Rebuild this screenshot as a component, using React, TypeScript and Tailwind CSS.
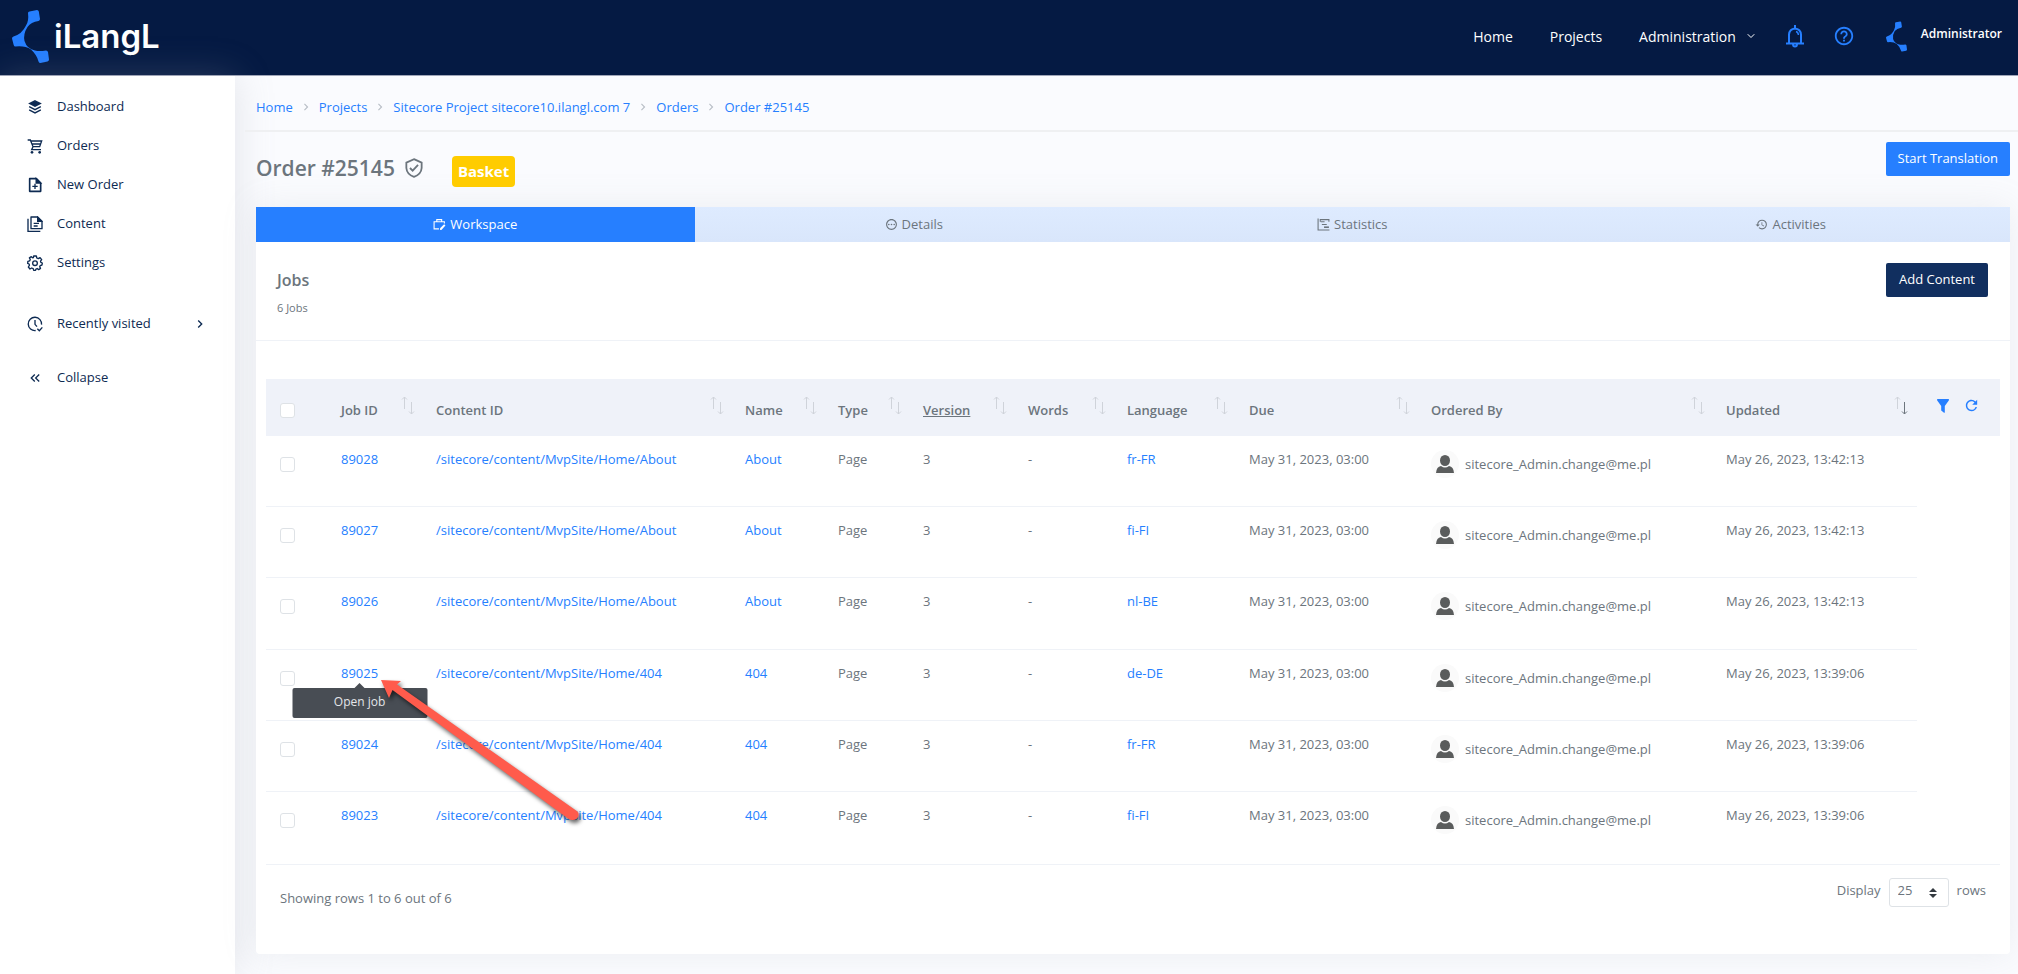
import {
  MdHistory,
  MdHelpOutline,
  MdRefresh,
  MdKeyboardDoubleArrowLeft,
  MdChevronRight,
  MdOutlinePending,
} from 'react-icons/md';
import { ChevronDown } from 'lucide-react';

interface Job {
  id: number;
  path: string;
  name: string;
  language: string;
  updated: string;
}

const jobs: Job[] = [
  { id: 89028, path: '/sitecore/content/MvpSite/Home/About', name: 'About', language: 'fr-FR', updated: 'May 26, 2023, 13:42:13' },
  { id: 89027, path: '/sitecore/content/MvpSite/Home/About', name: 'About', language: 'fi-FI', updated: 'May 26, 2023, 13:42:13' },
  { id: 89026, path: '/sitecore/content/MvpSite/Home/About', name: 'About', language: 'nl-BE', updated: 'May 26, 2023, 13:42:13' },
  { id: 89025, path: '/sitecore/content/MvpSite/Home/404', name: '404', language: 'de-DE', updated: 'May 26, 2023, 13:39:06' },
  { id: 89024, path: '/sitecore/content/MvpSite/Home/404', name: '404', language: 'fr-FR', updated: 'May 26, 2023, 13:39:06' },
  { id: 89023, path: '/sitecore/content/MvpSite/Home/404', name: '404', language: 'fi-FI', updated: 'May 26, 2023, 13:39:06' },
];

// the content column has no width, it takes what is left
const columns = [
  { label: 'Job ID', width: 'w-[95px]' },
  { label: 'Content ID', width: '' },
  { label: 'Name', width: 'w-[93px]' },
  { label: 'Type', width: 'w-[85px]' },
  { label: 'Version', width: 'w-[105px]' },
  { label: 'Words', width: 'w-[99px]' },
  { label: 'Language', width: 'w-[122px]' },
  { label: 'Due', width: 'w-[182px]' },
  { label: 'Ordered By', width: 'w-[295px]' },
  { label: 'Updated', width: 'w-[203px]' },
];

const crumbs = ['Home', 'Projects', 'Sitecore Project sitecore10.ilangl.com 7', 'Orders', 'Order #25145'];

function LogoMark({ className }: { className: string }) {
  return (
    <svg viewBox="0 0 37 53" className={className} fill="#267fff" aria-hidden="true">
      <path d="M17.500 1.500 L25 0 Q26.500 0 26.800 1.500 L28 9 Q28 10.500 26.500 11 Q19 12 15.500 17 Q11 24 12.500 31 Q15 39 23 40.500 Q27 41.500 34 40.500 Q35.500 40.500 36 42 L37 49.500 Q37 51 35.500 51.500 L28.500 53 Q27 53 26.500 51.500 Q25 45 19 39.500 Q13 35.500 3.500 36.500 Q2 36.500 1.700 35 L0 28.500 Q0 27 1.500 26.500 Q10 24 14 15.500 Q17 11 16 3 Q16 1.800 17.500 1.500 Z" />
    </svg>
  );
}

function StackIcon() {
  return (
    <svg viewBox="0 0 24 24" className="size-4 p-px" fill="none" stroke="currentColor" strokeWidth="2.500" aria-hidden="true">
      <path d="M12 1.500 L21 6 L12 10.500 L3 6 Z" fill="currentColor" />
      <path d="M2 11.500 L12 16.500 L22 11.500" />
      <path d="M2 17 L12 22 L22 17" />
    </svg>
  );
}

function CartIcon() {
  return (
    <svg viewBox="0 0 24 24" className="size-4" fill="none" stroke="currentColor" strokeWidth="2" aria-hidden="true">
      <path d="M1 3 H5 L9 13 H19 L22 4.500 H6 M9 13 L7 17.500 H21 M8 9 H20" />
      <circle cx="7.500" cy="21.500" r="2" fill="currentColor" stroke="none" />
      <circle cx="19" cy="21.500" r="2" fill="currentColor" stroke="none" />
    </svg>
  );
}

function FileAddIcon() {
  return (
    <svg viewBox="0 0 24 24" className="size-4" fill="none" stroke="currentColor" strokeWidth="2.500" aria-hidden="true">
      <path d="M4 2.500 H14 L20.500 9 V21.500 H4 Z" strokeLinejoin="round" />
      <path d="M14 3 V9 H20 Z" fill="currentColor" />
      <path d="M12 10 V18 M8 14 H16" strokeWidth="2" />
    </svg>
  );
}

function FilesIcon() {
  return (
    <svg viewBox="0 0 24 24" className="size-4" fill="none" stroke="currentColor" strokeWidth="2" aria-hidden="true">
      <path d="M6 1.500 H16 L22.500 8 V19 H6 Z" strokeLinejoin="round" />
      <path d="M16 2 V8 H22 Z" fill="currentColor" />
      <path d="M1.500 4 V23 H20 M10 11 H18 M10 15 H16" />
    </svg>
  );
}

function GearIcon() {
  return (
    <svg viewBox="0 0 24 24" className="size-4" fill="none" stroke="currentColor" strokeWidth="2" strokeLinejoin="round" aria-hidden="true">
      <path d="M10 1.500 H14 L14.700 4.500 L17 5.500 L19.600 3.900 L22 7 L20.300 9.300 L20.800 11 L23 12 L22.500 15 L19.800 15.800 L19 17.500 L20.300 20 L17.500 22 L15.300 20.300 L13.500 21 L12.800 23 H10 L9.300 20.500 L7 19.500 L4.500 21 L2 18 L3.600 15.500 L3.200 13.500 L1 12.500 L1.300 9.500 L3.900 8.800 L4.900 6.700 L3.600 4.300 L6.500 2.500 L8.500 4.200 L9.600 3.800 Z" />
      <circle cx="12" cy="12.300" r="3.500" />
    </svg>
  );
}

function ClockCheckIcon() {
  return (
    <svg viewBox="0 0 24 24" className="size-4" fill="none" stroke="currentColor" strokeWidth="2" aria-hidden="true">
      <path d="M13 21.800 A10 10 0 1 1 21.800 13" />
      <path d="M12 6 V12.500 L15 16 M15.500 19 L18.500 22 L23 17" />
    </svg>
  );
}

function BriefcaseEditIcon() {
  return (
    <svg viewBox="0 0 24 24" className="size-[13px]" fill="none" stroke="currentColor" strokeWidth="2" aria-hidden="true">
      <path d="M11 20 H2 V7 H21 V10 M7 7 V3 H16 V7" />
      <path d="M13 22 V19 L20.500 11.500 L23 14 L15.500 22 Z" fill="currentColor" stroke="none" />
    </svg>
  );
}

function GanttIcon() {
  return (
    <svg viewBox="0 0 24 24" className="size-[13px]" fill="none" stroke="currentColor" strokeWidth="2" aria-hidden="true">
      <path d="M2 1 V22 H23 M6 7 V3 H22 V7 M7 7 H14 M9 12 H18" />
      <path d="M13 17 H22" strokeWidth="3" />
    </svg>
  );
}

function ShieldIcon() {
  return (
    <svg viewBox="0 0 20 22" className="h-5 w-[18px]" fill="none" stroke="currentColor" strokeWidth="2" aria-hidden="true">
      <path d="M10 1.200 L18.500 5 V11 Q18 18 10 20.800 Q2 18 1.500 11 V5 Z" />
      <path d="M5.500 11 L8.500 14 L14.500 7.500" />
    </svg>
  );
}

function BellIcon() {
  return (
    <svg viewBox="0 0 20 24" className="h-6 w-5" fill="none" stroke="currentColor" strokeWidth="2" aria-hidden="true">
      <path d="M1 19.500 H19 M4 19 V10.500 Q4.500 5 10 4.500 Q15.500 5 16 10.500 V19 M10 1 V4.500 M8 20 Q8 22.500 10 22.500 Q12 22.500 12 20" />
      <path d="M11 7.500 Q13 8 13.500 11" strokeWidth="1.500" />
    </svg>
  );
}

function FunnelIcon() {
  return (
    <svg viewBox="0 0 12 14" className="h-[14px] w-3" fill="currentColor" aria-hidden="true">
      <path d="M0.500 0 H11.500 Q12.300 0.500 11.800 1.500 L7.800 7 V13.500 Q7.500 14 7 13.700 L4.200 11.500 V7 L0.200 1.500 Q-0.200 0.500 0.500 0 Z" />
    </svg>
  );
}

function SortArrows({ active = false }: { active?: boolean }) {
  return (
    <svg viewBox="0 0 14 19" className="h-[19px] w-[14px]" fill="none" strokeWidth="1" aria-hidden="true">
      <g stroke="#cfd3da">
        <path d="M3.500 13 V1 M1 3.500 L3.500 1 L6 3.500" />
      </g>
      <g stroke={active ? '#6c757d' : '#cfd3da'}>
        <path d="M10.500 6 V18 M8 15.500 L10.500 18 L13 15.500" />
      </g>
    </svg>
  );
}

function Person() {
  return (
    <span className="flex size-7 items-center justify-center rounded-full bg-[#fafafa]">
      <svg viewBox="0 0 18 18" className="size-[18px]" fill="#5a5c5c" aria-hidden="true">
        <path d="M0 18 Q0.500 11.500 5 11 Q9 14 13 11 Q17.500 11.500 18 18 Z" />
        <ellipse cx="9" cy="5.500" rx="5" ry="5.500" />
      </svg>
    </span>
  );
}

function Pointer() {
  return (
    <svg
      viewBox="0 0 210 150"
      className="pointer-events-none absolute top-[14px] left-9 z-20 h-[150px] w-[210px] max-w-none drop-shadow-[2px_3px_2px_rgba(0,0,0,0.6)]"
      aria-hidden="true">
      <path
        d="M4 3 L24 4 L20 7.500 L200.500 134.500 Q203 138 200 141.500 Q196 144.500 191 141.500 L15.500 13 L12 21 Z"
        fill="#ff5b4c"
      />
    </svg>
  );
}

function JobTooltip() {
  return (
    <span
      role="tooltip"
      className="absolute top-[25px] left-1/2 z-10 h-[30px] w-[135px] -translate-x-1/2 rounded-xs bg-[#484d54] text-center text-xs leading-7 text-[#e4e6e9]">
      <span className="absolute -top-[5px] left-1/2 -translate-x-1/2 border-x-[5px] border-b-[5px] border-x-transparent border-b-[#484d54]" />
      Open job
    </span>
  );
}

function Checkbox({ label }: { label: string }) {
  return (
    <input
      type="checkbox"
      aria-label={label}
      className="block size-[15px] appearance-none rounded-[3px] border border-[#dee2e6] bg-white"
    />
  );
}

function Header() {
  return (
    <header className="flex h-[76px] items-center justify-between border-b border-[#9fa5b8] bg-[#051a43] pr-4 pb-[3px] pl-3 text-white">
      <a href="#" className="flex items-center gap-[5px]">
        <LogoMark className="h-[53px] w-[37px]" />
        <span className="font-['Inter'] text-[33px] leading-10 font-semibold">iLangL</span>
      </a>
      <nav className="flex items-center text-[14px]">
        <a href="#" className="mr-[37px]">Home</a>
        <a href="#" className="mr-[37px]">Projects</a>
        <button type="button" className="mr-7 flex items-center gap-[9px]">
          Administration <ChevronDown className="size-3" strokeWidth={2} />
        </button>
        <button type="button" aria-label="Notifications" className="mr-7 text-[#267fff]">
          <BellIcon />
        </button>
        <button type="button" aria-label="Help" className="mr-[31px] text-[#267fff]">
          <MdHelpOutline className="size-[22px]" />
        </button>
        <a href="#" className="flex items-center gap-[14px] text-xs font-semibold">
          <LogoMark className="h-[31px] w-[21px]" />
          <span className="pb-1">Administrator</span>
        </a>
      </nav>
    </header>
  );
}

function Sidebar() {
  const items = [
    { label: 'Dashboard', icon: <StackIcon /> },
    { label: 'Orders', icon: <CartIcon /> },
    { label: 'New Order', icon: <FileAddIcon /> },
    { label: 'Content', icon: <FilesIcon /> },
    { label: 'Settings', icon: <GearIcon /> },
  ];
  const row = 'flex h-[39px] w-full items-center gap-[14px] pr-[27px] pl-[27px]';
  return (
    <aside className="w-[235px] shrink-0 bg-white pt-[11px] text-[13px] text-[#0d2a52] shadow-[0_0_35px_0_rgba(154,161,171,0.25)]">
      <ul>
        {items.map((item) => (
          <li key={item.label}>
            <a href="#" className={row}>
              {item.icon}
              {item.label}
            </a>
          </li>
        ))}
      </ul>
      <button type="button" className={`${row} mt-[22px]`}>
        <ClockCheckIcon />
        Recently visited
        <MdChevronRight className="ml-auto size-4" />
      </button>
      <button type="button" className={`${row} mt-[15px]`}>
        <MdKeyboardDoubleArrowLeft className="size-4" />
        Collapse
      </button>
    </aside>
  );
}

function Tabs() {
  const tab = 'flex h-[35px] flex-1 items-center justify-center gap-1';
  return (
    <div role="tablist" className="flex bg-linear-to-b from-[#deebff] to-[#d9e6fb] text-[13px]">
      <button type="button" role="tab" aria-selected="true" className={`${tab} bg-[#267fff] font-medium text-white`}>
        <BriefcaseEditIcon /> Workspace
      </button>
      <button type="button" role="tab" aria-selected="false" className={tab}>
        <MdOutlinePending className="size-[13px]" /> Details
      </button>
      <button type="button" role="tab" aria-selected="false" className={tab}>
        <GanttIcon /> Statistics
      </button>
      <button type="button" role="tab" aria-selected="false" className={tab}>
        <MdHistory className="size-[13px]" /> Activities
      </button>
    </div>
  );
}

function JobsTable() {
  const cell = 'border-b border-[#eff2f7] pt-[13px] pl-3 align-top leading-5 group-last:border-b-0';
  return (
    <table className="w-full table-fixed border-separate border-spacing-0 text-left">
      <thead>
        <tr className="h-[57px] bg-[#eff2f9]">
          <th className="w-[63px] pt-[6px] pl-[14px]">
            <Checkbox label="Select all jobs" />
          </th>
          {columns.map((col) => (
            <th key={col.label} className={`${col.width} pr-[9px] pl-3 font-semibold`}>
              <div className="flex items-center justify-between">
                <span className={`pt-1 leading-5 ${col.label === 'Version' ? 'underline' : ''}`}>{col.label}</span>
                <span className="pb-1">
                  <SortArrows active={col.label === 'Updated'} />
                </span>
              </div>
            </th>
          ))}
          <th className="w-[83px] pb-1 pl-5 text-[#267fff]">
            <div className="flex items-center gap-[14px]">
              <button type="button" aria-label="Filter">
                <FunnelIcon />
              </button>
              <button type="button" aria-label="Refresh">
                <MdRefresh className="size-[17px]" />
              </button>
            </div>
          </th>
        </tr>
      </thead>
      <tbody>
        {jobs.map((job) => (
          <tr key={job.id} className="group h-[71px] nth-[3n]:h-[72px]">
            <td className="border-b border-[#eff2f7] pt-[21px] pl-[14px] align-top group-last:border-b-0">
              <Checkbox label={`Select job ${job.id}`} />
            </td>
            <td className={cell}>
              <span className="relative inline-block">
                <a href="#" className="text-[#267fff]">{job.id}</a>
                {job.id === 89025 && (
                  <>
                    <JobTooltip />
                    <Pointer />
                  </>
                )}
              </span>
            </td>
            <td className={cell}>
              <a href="#" className="text-[#267fff]">{job.path}</a>
            </td>
            <td className={cell}>
              <a href="#" className="text-[#267fff]">{job.name}</a>
            </td>
            <td className={cell}>Page</td>
            <td className={cell}>3</td>
            <td className={cell}>-</td>
            <td className={cell}>
              <a href="#" className="text-[#267fff]">{job.language}</a>
            </td>
            <td className={cell}>May 31, 2023, 03:00</td>
            <td className={cell}>
              <div className="flex items-center gap-[6px] pt-px">
                <Person />
                sitecore_Admin.change@me.pl
              </div>
            </td>
            <td className={cell}>{job.updated}</td>
            <td />
          </tr>
        ))}
      </tbody>
    </table>
  );
}

function TableFooter() {
  return (
    <div className="flex items-start justify-between border-t border-[#eff2f7] px-[14px] pt-[13px] pb-[46px]">
      <p className="pt-[10px] leading-5">Showing rows 1 to 6 out of 6</p>
      <div className="flex items-center gap-2">
        <label htmlFor="page-size" className="pb-[3px]">Display</label>
        <span className="relative flex">
          <select
            id="page-size"
            defaultValue="25"
            className="h-[29px] w-[60px] appearance-none rounded-[3px] border border-[#dee2e6] bg-white pb-[3px] pl-2">
            <option>25</option>
            <option>50</option>
            <option>100</option>
          </select>
          <svg viewBox="0 0 8 10" className="pointer-events-none absolute top-[10px] right-3 h-[10px] w-2" fill="#343a40" aria-hidden="true">
            <path d="M0 4 L4 0 L8 4 Z M0 6 L4 10 L8 6 Z" />
          </svg>
        </span>
        <span className="pb-[3px]">rows</span>
      </div>
    </div>
  );
}

export default function App() {
  return (
    <div className="flex min-h-screen flex-col bg-[#fafbfe] font-['Open_Sans',sans-serif] text-[13px] text-[#6c757d]">
      <Header />
      <div className="flex flex-1">
        <Sidebar />
        <main className="min-w-0 flex-1 pl-[10px]">
          <nav aria-label="Breadcrumb" className="border-b-2 border-[#eff0f2] pt-[21px] pb-[13px] pl-[11px]">
            <ol className="flex items-center leading-5 text-[#267fff]">
              {crumbs.map((crumb, i) => (
                <li key={crumb} className="flex items-center">
                  {i > 0 && <MdChevronRight className="mx-[6px] size-[14px] text-[#b9bfc6]" />}
                  <a href="#">{crumb}</a>
                </li>
              ))}
            </ol>
          </nav>

          <div className="pr-2 pb-5 pl-[11px]">
            <div className="flex h-[75px] items-start justify-between pt-[10px]">
              <div className="flex items-center pt-[10px]">
                <h1 className="mr-[10px] pb-1 text-[21px] leading-7 font-semibold">Order #25145</h1>
                <span className="pb-1">
                  <ShieldIcon />
                </span>
                <span className="mt-1 ml-[29px] flex h-[31px] items-center rounded-sm bg-[#fc0] px-[6px] text-[15px] font-bold text-white">
                  Basket
                </span>
              </div>
              <button type="button" className="h-[34px] rounded-xs bg-[#267fff] px-3 text-white">
                Start Translation
              </button>
            </div>

            <section className="rounded-b shadow-[0_0_35px_0_rgba(154,161,171,0.15)]">
              <Tabs />
              <div className="rounded-b bg-white">
                <div className="flex h-[99px] items-start justify-between border-b border-[#eff2f7] pr-[22px] pl-[21px] pt-[21px]">
                  <div>
                    <h2 className="pt-[5px] text-base leading-6 font-semibold">Jobs</h2>
                    <p className="pt-2 text-[11px] leading-4">6 Jobs</p>
                  </div>
                  <button type="button" className="h-[34px] rounded-xs bg-[#112f5f] px-[13px] text-white">
                    Add Content
                  </button>
                </div>
                <div className="px-[10px] pt-[38px]">
                  <JobsTable />
                  <TableFooter />
                </div>
              </div>
            </section>
          </div>
        </main>
      </div>
    </div>
  );
}
